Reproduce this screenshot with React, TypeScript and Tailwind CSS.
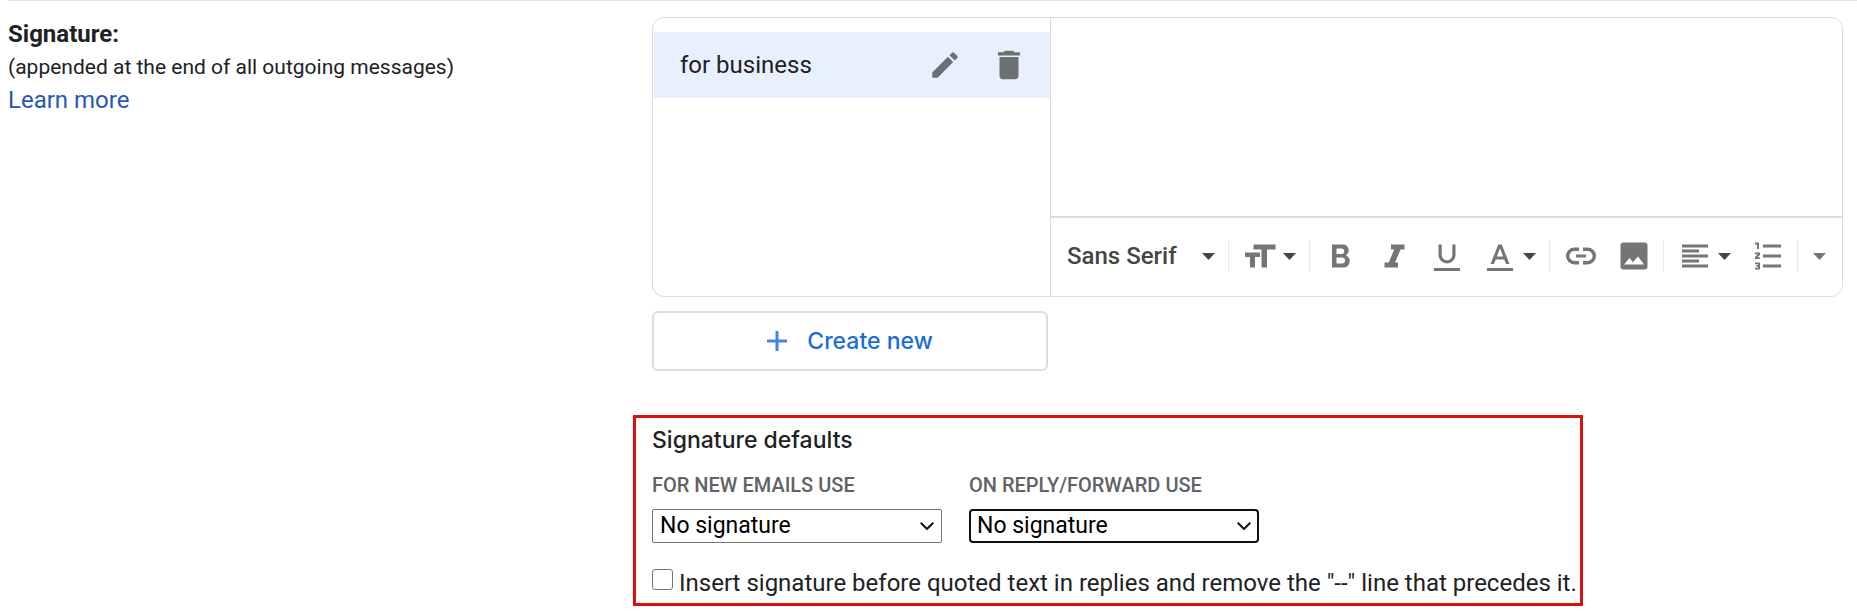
import type { ReactNode } from "react";
import { MdEdit, MdDelete } from "react-icons/md";

function Caret({ className = "text-[#444746]" }: { className?: string }) {
  return (
    <svg viewBox="0 0 13 7" className={`h-[7px] w-[13px] shrink-0 ${className}`} fill="currentColor" aria-hidden="true">
      <path d="M0 0h13L6.500 7z" />
    </svg>
  );
}

function Tool({ label, children }: { label: string; children?: ReactNode }) {
  return (
    <button type="button" aria-label={label} className="flex h-9 items-center gap-[7px]">
      {children}
    </button>
  );
}

function Glyph({ children }: { children: ReactNode }) {
  return (
    <svg viewBox="0 0 32 32" className="size-8 shrink-0" fill="currentColor" aria-hidden="true">
      {children}
    </svg>
  );
}

function Group({ children }: { children: ReactNode }) {
  return (
    <div className="flex h-8 shrink-0 items-center gap-[21px] border-l border-[#e8eaed] pr-[13px] pl-[15px]">
      {children}
    </div>
  );
}

function Toolbar() {
  return (
    <div className="flex h-20 items-center border-t-2 border-[#dadce0] pr-[3px] pb-0.5 pl-4 text-[#757575]">
      <button
        type="button"
        className="mr-[13px] flex flex-1 items-center justify-between font-medium whitespace-nowrap text-[#444746]"
      >
        Sans Serif
        <Caret />
      </button>
      <Group>
        <Tool label="Size">
          <Glyph>
            <path d="M9.500 4.500h22v5h-8.500v18h-5.500v-18h-8zM1 12.500h15v4.500h-5v10.500h-5V17H1z" />
          </Glyph>
          <Caret />
        </Tool>
      </Group>
      <Group>
        <Tool label="Bold">
          <Glyph>
            <path
              fillRule="evenodd"
              d="M7 4.500h10.500a6 6 0 0 1 3.500 11 6.300 6.300 0 0 1-3 12H7zm4.500 4v5.500h5a2.750 2.750 0 0 0 0-5.500zm0 9v6h5.500a3 3 0 0 0 0-6z"
            />
          </Glyph>
        </Tool>
        <Tool label="Italic">
          <Glyph>
            <path d="M13 4.500h13.500V9.500h-4L17 22.500h3v5H6.500v-5h4.200L16.200 9.500H13z" />
          </Glyph>
        </Tool>
        <Tool label="Underline">
          <Glyph>
            <path d="M7.500 4.500h3.200v10.500a5.300 5.300 0 0 0 10.600 0V4.500h3.200V15a8.500 8.500 0 0 1-17 0zM3 28h26v3H3z" />
          </Glyph>
        </Tool>
        <Tool label="Text color">
          <Glyph>
            <path
              fillRule="evenodd"
              d="M14.300 4.500h3.400L25.500 24H22l-1.800-4.600h-8.400L10 24H6.500zM16 8.300l-3.100 8.100h6.200zM3 28h26v3H3z"
            />
          </Glyph>
          <Caret />
        </Tool>
      </Group>
      <Group>
        <Tool label="Link">
          <Glyph>
            <path d="M14 7.500v3.400H9.500a5.100 5.100 0 0 0 0 10.200H14v3.400H9.500a8.500 8.500 0 0 1 0-17zM18 7.500h4.500a8.500 8.500 0 0 1 0 17H18v-3.400h4.500a5.100 5.100 0 0 0 0-10.200H18zM11 14.500h10v3H11z" />
          </Glyph>
        </Tool>
        <Tool label="Insert image">
          <Glyph>
            <path
              fillRule="evenodd"
              d="M5.500 2.500h21a3 3 0 0 1 3 3v21a3 3 0 0 1-3 3h-21a3 3 0 0 1-3-3v-21a3 3 0 0 1 3-3zM6 24.500h20l-6-8-5 5.700-3.500-4.200z"
            />
          </Glyph>
        </Tool>
      </Group>
      <Group>
        <Tool label="Align">
          <Glyph>
            <path d="M3 4.500h26v3H3zm0 5h17v3H3zm0 5h26v3H3zm0 5h17v3H3zm0 5h26v3H3z" />
          </Glyph>
          <Caret />
        </Tool>
        <Tool label="Numbered list">
          <Glyph>
            <path d="M11 4.500h18v3H11zm0 10h18v3H11zm0 10h18v3H11zM3 2.500h4V9H5V4.500H3zM3 12.500h5v2.500L5.500 17.200H8V19H3v-2l2.700-2.700H3zM3 22.500h5v7H3v-1.800h3v-.9H4.200v-1.600H6v-.9H3z" />
          </Glyph>
        </Tool>
      </Group>
      <Group>
        <Tool label="More formatting options">
          <Caret className="text-[#757575]" />
        </Tool>
      </Group>
    </div>
  );
}

function SignatureSelect({ id, label, focused = false }: { id: string; label: string; focused?: boolean }) {
  return (
    <div className="flex w-[290px] flex-col gap-3">
      <label htmlFor={id} className="text-xl leading-6 font-medium whitespace-nowrap text-[#5f6368] uppercase">
        {label}
      </label>
      <div className="grid items-center">
        <select
          id={id}
          className={`col-start-1 row-start-1 h-[34px] w-full appearance-none bg-white text-[23px] leading-7 text-black outline-none ${
            focused ? "rounded-[4px] border-2 border-[#101010] pl-[6px]" : "rounded-[2px] border border-[#767676] pl-[7px]"
          }`}
        >
          <option>No signature</option>
          <option>for business</option>
        </select>
        <svg
          viewBox="0 0 14 8"
          className="pointer-events-none col-start-1 row-start-1 mr-2 h-2 w-3.5 justify-self-end"
          fill="none"
          stroke="#101010"
          strokeWidth="2"
          aria-hidden="true"
        >
          <path d="M.8.800 7 7 13.200.800" />
        </svg>
      </div>
    </div>
  );
}

export default function App() {
  return (
    <main className="bg-white pl-2 font-[Roboto,sans-serif] text-2xl text-[#202124]">
      <section className="flex border-t border-[#e0e0e0] pr-[14px]">
        <div className="w-[625px] shrink-0 pt-4 leading-[34px]">
          <h2 className="leading-[34px] font-bold">Signature:</h2>
          <p className="text-[21px] leading-8">(appended at the end of all outgoing messages)</p>
          <a href="#learn-more" className="block leading-[34px] text-[#2a56b5]">
            Learn more
          </a>
        </div>

        <div className="min-w-0 flex-1 pt-4">
          <div className="ml-[19px] flex h-[280px] overflow-hidden rounded-xl border border-[#dadce0]">
            <div className="w-[398px] shrink-0 border-r border-[#dadce0] pt-[14px] pl-px">
              <div className="flex h-[66px] items-center bg-[#e8f0fe] pr-[22px] pl-[26px]">
                <span className="flex-1">for business</span>
                <button type="button" aria-label="Edit signature" className="mr-7 text-[#6b7075]">
                  <MdEdit size={34} />
                </button>
                <button type="button" aria-label="Delete signature" className="text-[#6b7075]">
                  <MdDelete size={38} />
                </button>
              </div>
            </div>
            <div className="flex min-w-0 flex-1 flex-col">
              <textarea aria-label="Signature text" className="min-h-0 flex-1 resize-none p-4 outline-none" />
              <Toolbar />
            </div>
          </div>

          <button
            type="button"
            className="mt-[14px] ml-[19px] flex h-[60px] w-[396px] items-center justify-center gap-5 rounded-md border-2 border-[#dadce0] font-[Inter,sans-serif] text-[23px] font-medium text-[#1a6dd6]"
          >
            <svg viewBox="0 0 20 20" className="size-5" fill="#4a80e8" aria-hidden="true">
              <path d="M8.500 0h3v8.500H20v3h-8.500V20h-3v-8.500H0v-3h8.500z" />
            </svg>
            Create new
          </button>

          <div className="mt-11 w-[950px] border-[3px] border-[#dd1010] pt-[7px] pb-1 pl-4">
            <h3 className="font-[Inter,sans-serif] text-[23px] leading-[30px] font-medium">Signature defaults</h3>
            <div className="mt-[18px] flex gap-[27px]">
              <SignatureSelect id="new-emails" label="For new emails use" />
              <SignatureSelect id="reply-forward" label="On reply/forward use" focused />
            </div>
            <div className="mt-6 flex items-start gap-1.5">
              <input
                id="insert-before"
                type="checkbox"
                className="mt-0.5 size-[21px] shrink-0 appearance-none rounded-[3px] border border-[#767676] bg-white"
              />
              <label htmlFor="insert-before" className="leading-8 whitespace-nowrap">
                Insert signature before quoted text in replies and remove the "--" line that precedes it.
              </label>
            </div>
          </div>
        </div>
      </section>
    </main>
  );
}
